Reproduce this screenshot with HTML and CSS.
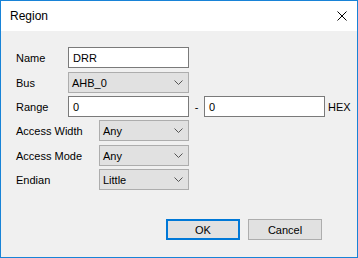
FILE: index.html
```html
<!DOCTYPE html>
<html lang="en">
<head>
  <meta charset="UTF-8">
  <title>Region</title>
  <link rel="stylesheet" href="styles.css">
</head>
<body>
  <div class="dialog">
    <div class="titlebar">
      <span class="title">Region</span>
      <svg class="close" width="10" height="10" viewBox="0 0 10 10">
        <path d="M0.5 0.5 L9.5 9.5 M9.5 0.5 L0.5 9.5" stroke="#000" stroke-width="1"/>
      </svg>
    </div>

    <div class="form">
      <div class="row">
        <label class="lbl">Name</label>
        <div class="field input wide">DRR</div>
      </div>
      <div class="row extra">
        <label class="lbl">Bus</label>
        <div class="field select wide">AHB_0
          <svg class="chev" width="9" height="5" viewBox="0 0 9 5"><path d="M0.5 0.5 L4.5 4.5 L8.5 0.5" fill="none" stroke="#555" stroke-width="1"/></svg>
        </div>
      </div>
      <div class="row">
        <label class="lbl">Range</label>
        <div class="field input wide">0</div>
        <span class="dash">-</span>
        <div class="field input wide">0</div>
        <span class="hex">HEX</span>
      </div>
      <div class="row">
        <label class="lbl long">Access Width</label>
        <div class="field select short">Any
          <svg class="chev" width="9" height="5" viewBox="0 0 9 5"><path d="M0.5 0.5 L4.5 4.5 L8.5 0.5" fill="none" stroke="#555" stroke-width="1"/></svg>
        </div>
      </div>
      <div class="row extra">
        <label class="lbl long">Access Mode</label>
        <div class="field select short">Any
          <svg class="chev" width="9" height="5" viewBox="0 0 9 5"><path d="M0.5 0.5 L4.5 4.5 L8.5 0.5" fill="none" stroke="#555" stroke-width="1"/></svg>
        </div>
      </div>
      <div class="row">
        <label class="lbl long">Endian</label>
        <div class="field select short">Little
          <svg class="chev" width="9" height="5" viewBox="0 0 9 5"><path d="M0.5 0.5 L4.5 4.5 L8.5 0.5" fill="none" stroke="#555" stroke-width="1"/></svg>
        </div>
      </div>
    </div>

    <div class="buttons">
      <button class="btn default">OK</button>
      <button class="btn">Cancel</button>
    </div>
  </div>
</body>
</html>
```

FILE: styles.css
```css
body {
  margin: 0;
  font-family: "Liberation Sans", Arial, sans-serif;
  font-size: 11px;
  color: #000;
}
.dialog {
  width: 356px;
  height: 256px;
  border: 1px solid #1883d7;
  background: #f0f0f0;
  display: flex;
  flex-direction: column;
}
.titlebar {
  height: 30px;
  background: #fff;
  display: flex;
  align-items: center;
  justify-content: space-between;
  padding: 0 10px 0 9px;
}
.title {
  font-size: 12px;
}
.close {
  display: block;
}
.form {
  padding: 16px 0 0 15px;
  display: flex;
  flex-direction: column;
  gap: 3px;
}
.row {
  display: flex;
  align-items: center;
  height: 21px;
}
.row.extra {
  margin-top: 1px;
}
.lbl {
  width: 52px;
}
.lbl.long {
  width: 83px;
}
.field {
  box-sizing: border-box;
  height: 21px;
  display: flex;
  align-items: center;
  padding-left: 4px;
}
.input {
  background: #fff;
  border: 1px solid #7a7a7a;
}
.select {
  background: #e1e1e1;
  border: 1px solid #adadad;
  padding-left: 3px;
  justify-content: space-between;
  padding-right: 5px;
}
.wide {
  width: 121px;
}
.short {
  width: 90px;
}
.dash {
  width: 15px;
  text-align: center;
}
.hex {
  margin-left: 3px;
}
.buttons {
  margin-top: auto;
  display: flex;
  justify-content: flex-end;
  gap: 8px;
  padding: 0 35px 17px 0;
}
.btn {
  box-sizing: border-box;
  width: 74px;
  height: 21px;
  background: #e1e1e1;
  border: 1px solid #adadad;
  font-family: inherit;
  font-size: 11px;
  color: #000;
  padding: 0;
}
.btn.default {
  border: 2px solid #0078d7;
}
```
